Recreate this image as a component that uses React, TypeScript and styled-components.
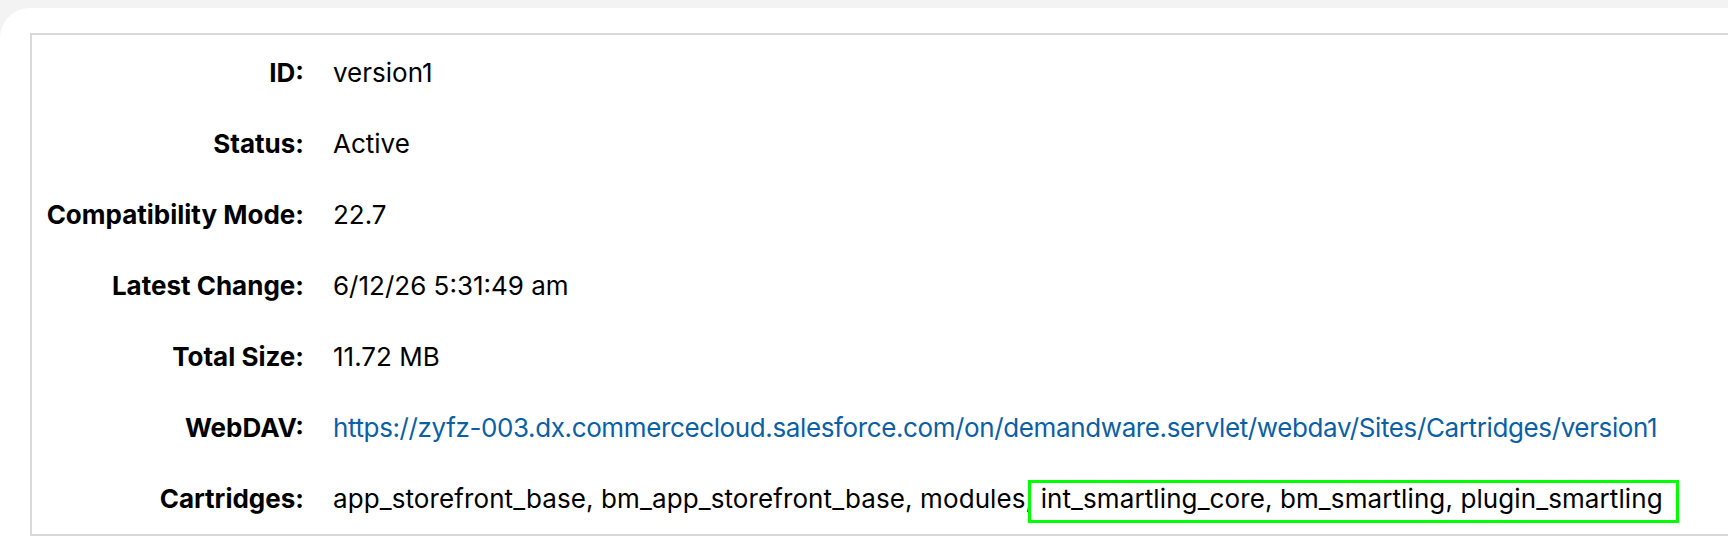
import styled, { createGlobalStyle } from "styled-components";

const GlobalStyle = createGlobalStyle`
    html, body {
        margin: 0;
        padding: 0;
        background: #f3f3f3;
        font-family: Inter, "Liberation Sans", sans-serif;
        color: #000;
        overflow: hidden;
    }
`;

const SdivPanel = styled.div`
    margin-top: 8px;
    background: #fff;
    border-top-left-radius: 30px;
    height: 544px;
    padding: 25px 0 0 30px;
    box-sizing: border-box;
`;

const SdivTable = styled.div`
    border-top: 2px solid #d9d9d9;
    border-left: 2px solid #d9d9d9;
    border-bottom: 2px solid #d9d9d9;
    padding-top: 2px;
`;

const SdivRow = styled.div`
    display: grid;
    grid-template-columns: 272px 1fr;
    column-gap: 29px;
    align-items: center;
    height: 71px;
    font-size: 26px;
    white-space: nowrap;
`;

const SspanLabel = styled.span`
    font-weight: 700;
    text-align: right;
`;

const SspanValue = styled.span<{ $spacing?: number }>`
    font-weight: 400;
    letter-spacing: ${p => p.$spacing ?? 0}px;
`;

const SaLink = styled.a`
    color: #0b5fa5;
    text-decoration: none;
    letter-spacing: -0.38px;
`;

const SspanHighlight = styled.span`
    position: relative;

    &::after {
        content: "";
        position: absolute;
        left: -13px;
        right: -16px;
        top: -3px;
        bottom: -9px;
        border: 3px solid #00ff00;
        pointer-events: none;
    }
`;

type Row = { label: string; value: string };

const rows: Row[] = [
    { label: "ID:", value: "version1" },
    { label: "Status:", value: "Active" },
    { label: "Compatibility Mode:", value: "22.7" },
    { label: "Latest Change:", value: "6/12/26 5:31:49 am" },
    { label: "Total Size:", value: "11.72 MB" },
];

const WEBDAV_URL =
    "https://zyfz-003.dx.commercecloud.salesforce.com/on/demandware.servlet/webdav/Sites/Cartridges/version1";

const App = () => {
    return (
        <>
            <GlobalStyle />
            <SdivPanel>
                <SdivTable>
                    {rows.map(r => (
                        <SdivRow key={r.label}>
                            <SspanLabel>{r.label}</SspanLabel>
                            <SspanValue>{r.value}</SspanValue>
                        </SdivRow>
                    ))}
                    <SdivRow>
                        <SspanLabel>WebDAV:</SspanLabel>
                        <SspanValue>
                            <SaLink href="#">{WEBDAV_URL}</SaLink>
                        </SspanValue>
                    </SdivRow>
                    <SdivRow>
                        <SspanLabel>Cartridges:</SspanLabel>
                        <SspanValue $spacing={0.1}>
                            app_storefront_base, bm_app_storefront_base, modules,{" "}
                            <SspanHighlight>
                                int_smartling_core, bm_smartling, plugin_smartling
                            </SspanHighlight>
                        </SspanValue>
                    </SdivRow>
                </SdivTable>
            </SdivPanel>
        </>
    );
};

export default App;
